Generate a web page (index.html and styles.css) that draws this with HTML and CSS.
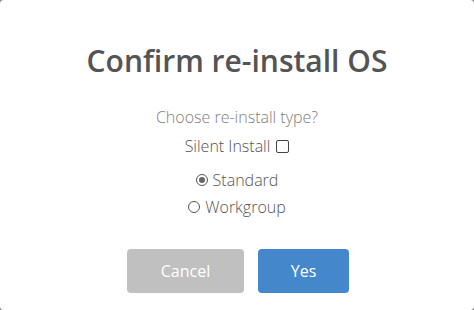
FILE: index.html
```html
<!DOCTYPE html>
<html>
<head>
<meta charset="utf-8">
<link rel="stylesheet" href="styles.css">
</head>
<body>
<div class="dialog">
  <h1 class="title">Confirm re-install OS</h1>
  <p class="question">Choose re-install type?</p>
  <label class="silent">Silent Install <span class="checkbox"></span></label>
  <div class="options">
    <label class="option"><span class="radio checked"></span>Standard</label>
    <label class="option"><span class="radio"></span>Workgroup</label>
  </div>
  <div class="actions">
    <button class="btn cancel">Cancel</button>
    <button class="btn yes">Yes</button>
  </div>
</div>
</body>
</html>
```
FILE: styles.css
```css
html, body {
  margin: 0;
  padding: 0;
  background: #8a8a8a;
}
body {
  width: 474px;
  height: 310px;
  overflow: hidden;
  font-family: "Open Sans", sans-serif;
}
.dialog {
  box-sizing: border-box;
  width: 474px;
  height: 310px;
  background: #fff;
  border-radius: 4px;
  display: flex;
  flex-direction: column;
  align-items: center;
  padding-top: 41px;
}
.title {
  margin: 0;
  font-size: 30px;
  font-weight: 600;
  color: #545454;
  line-height: 40px;
}
.question {
  margin: 25px 0 0;
  font-size: 16px;
  font-weight: 300;
  color: #808080;
  line-height: 22px;
}
.silent {
  margin-top: 7px;
  font-size: 16px;
  font-weight: 300;
  color: #555;
  line-height: 22px;
  display: flex;
  align-items: center;
  gap: 6px;
}
.checkbox {
  width: 11px;
  height: 11px;
  border: 1px solid #444;
  border-radius: 2px;
  display: inline-block;
}
.options {
  margin-top: 12px;
  display: flex;
  flex-direction: column;
  align-items: center;
  gap: 5px;
}
.option {
  font-size: 16px;
  font-weight: 300;
  color: #555;
  line-height: 22px;
  display: flex;
  align-items: center;
  gap: 5px;
}
.radio {
  box-sizing: border-box;
  width: 12px;
  height: 12px;
  border: 1px solid #555;
  border-radius: 50%;
  display: inline-block;
  position: relative;
}
.radio.checked::after {
  content: "";
  position: absolute;
  left: 2px;
  top: 2px;
  width: 6px;
  height: 6px;
  border-radius: 50%;
  background: #666;
}
.actions {
  margin-top: 31px;
  margin-left: 2px;
  display: flex;
  gap: 14px;
}
.btn {
  height: 44px;
  border: none;
  border-radius: 4px;
  color: #fff;
  font-family: "Open Sans", sans-serif;
  font-size: 16px;
  font-weight: 400;
  padding: 0;
}
.cancel {
  width: 117px;
  background: #c0c0c0;
}
.yes {
  width: 91px;
  background: #4587cb;
}
```
